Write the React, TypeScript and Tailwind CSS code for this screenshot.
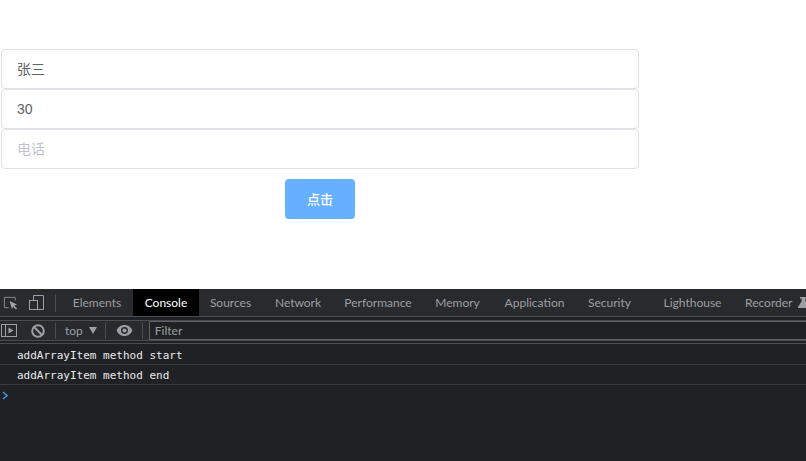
import React from "react";

const sans = "font-['Lato','Noto_Sans_CJK_SC',sans-serif]";

const tabs: { label: string; w: string; active?: boolean }[] = [
  { label: "Elements", w: "w-[72px]" },
  { label: "Console", w: "w-[66px]", active: true },
  { label: "Sources", w: "w-[63px]" },
  { label: "Network", w: "w-[72px]" },
  { label: "Performance", w: "w-[88px]" },
  { label: "Memory", w: "w-[71px]" },
  { label: "Application", w: "w-[83px]" },
  { label: "Security", w: "w-[67px]" },
  { label: "Lighthouse", w: "w-[99px]" },
];

function Field({ value, placeholder }: { value?: string; placeholder?: string }) {
  return (
    <div className="h-10 w-[638px] rounded border border-[#e0e1e4] bg-white px-[15px] flex items-center text-sm font-['Liberation_Sans','Noto_Sans_CJK_SC',sans-serif]">
      {value ? (
        <span className="text-[#606266]">{value}</span>
      ) : (
        <span className="text-[#c0c4cc]">{placeholder}</span>
      )}
    </div>
  );
}

function Sep() {
  return <div className="h-4 w-px bg-[#4a4b4e]" />;
}

export default function App() {
  return (
    <div className={`h-[461px] w-[806px] overflow-hidden flex flex-col bg-white ${sans}`}>
      <main className="h-[289px] shrink-0 pt-[49px] pl-px flex flex-col">
        <Field value="张三" />
        <Field value="30" />
        <Field placeholder="电话" />
        <div className="w-[638px] flex justify-center mt-[10px]">
          <button className="h-10 w-[70px] rounded bg-[#66b1ff] text-white text-[13px] font-medium font-['Noto_Sans_CJK_SC',sans-serif]">点击</button>
        </div>
      </main>

      <section className="flex-1 bg-[#202124] flex flex-col min-h-0">
        <div className="h-[28px] shrink-0 bg-[#292a2d] border-b border-[#494c50] flex items-center text-xs text-[#9c9fa3] overflow-hidden">
          <div className="w-[61px] shrink-0 h-full flex items-center pl-[3px]">
            <svg className="shrink-0" width="15" height="15" viewBox="0 0 16 16" fill="none">
              <path d="M6 13.5H1.5V2.5H13V6" stroke="#8a8f94" strokeWidth="1" />
              <path d="M7 6.5 L15 10 L12 11.3 L15 14.5 L13.8 15.5 L10.8 12.5 L9.5 15 Z" fill="#a0a5aa" />
            </svg>
            <svg className="ml-[11px] shrink-0" width="16" height="18" viewBox="0 0 16 18" fill="none" stroke="#9aa0a6" strokeWidth="1">
              <path d="M4.5 6V1.5H14.5V15.5H8.5" />
              <rect x="0.5" y="6.5" width="8" height="9" />
            </svg>
            <div className="ml-[10px] h-[18px] w-px bg-[#4a4b4e]" />
          </div>
          {tabs.map((t) => (
            <div
              key={t.label}
              className={`${t.w} shrink-0 h-full flex items-center justify-center ${
                t.active ? "bg-black text-white" : ""
              }`}
            >
              {t.label}
            </div>
          ))}
          <div className="shrink-0 flex items-center gap-[6px] pl-[3px]">
            <span>Recorder</span>
            <svg className="shrink-0" width="11" height="11" viewBox="0 0 11 11" fill="#9c9fa3">
              <path d="M2 0H9V1.5H7.5V4.5L11 10V11H0V10L3.5 4.5V1.5H2Z" />
            </svg>
          </div>
        </div>

        <div className="mt-[3px] h-[21px] shrink-0 bg-[#292a2d] border-t border-[#494c50] border-b flex items-center text-xs text-[#9c9fa3]">
          <svg className="ml-px shrink-0" width="16" height="14" viewBox="0 0 16 14" fill="none">
            <rect x="0.5" y="0.5" width="15" height="12" stroke="#9aa0a6" />
            <path d="M4.5 1V13" stroke="#9aa0a6" />
            <path d="M7.5 3.5L12.5 6.5L7.5 9.5Z" fill="#9aa0a6" />
          </svg>
          <svg className="ml-[14px] shrink-0" width="14" height="14" viewBox="0 0 14 14" fill="none" stroke="#9aa0a6" strokeWidth="2">
            <circle cx="7" cy="7" r="5.8" />
            <path d="M3 3L11 11" />
          </svg>
          <div className="ml-[10px]"><Sep /></div>
          <span className="ml-[9px] pt-px">top</span>
          <svg className="ml-[6px]" width="8" height="7" viewBox="0 0 8 7" fill="#9aa0a6"><path d="M0 0H8L4 7Z" /></svg>
          <div className="ml-[8px]"><Sep /></div>
          <svg className="ml-[10px]" width="17" height="11" viewBox="0 0 18 12">
            <path fillRule="evenodd" fill="#9aa0a6" d="M9 0C5 0 1.8 2.4 0.5 6 1.8 9.6 5 12 9 12s7.2-2.4 8.5-6C16.2 2.4 13 0 9 0Zm0 2.2a3.8 3.8 0 1 1 0 7.6 3.8 3.8 0 0 1 0-7.6Z" />
            <circle cx="9" cy="6" r="2.2" fill="#9aa0a6" />
          </svg>
          <div className="ml-[9px]"><Sep /></div>
          <div className="ml-[6px] flex-1 h-[19px] border border-[#5f6368] border-r-0 flex items-center pl-[5px] pt-px text-[#9c9fa3] bg-[#202124]">
            Filter
          </div>
        </div>

        <div className="h-[3px] shrink-0 border-b border-[#494c50]" />

        <div className="h-[21px] shrink-0 border-b border-[#3a3b3e] pl-[17px] pt-[4px] flex items-center font-['DejaVu_Sans_Mono',monospace] text-[11px] text-[#e8eaed]">
          addArrayItem method start
        </div>
        <div className="h-5 shrink-0 border-b border-[#3a3b3e] pl-[17px] pt-[4px] flex items-center font-['DejaVu_Sans_Mono',monospace] text-[11px] text-[#e8eaed]">
          addArrayItem method end
        </div>
        <div className="h-5 shrink-0 pl-[2px] flex items-center">
          <svg width="7" height="9" viewBox="0 0 7 9" fill="none" stroke="#4d90e8" strokeWidth="1.5">
            <path d="M1 1L5 4.5L1 8" />
          </svg>
        </div>
      </section>
    </div>
  );
}
